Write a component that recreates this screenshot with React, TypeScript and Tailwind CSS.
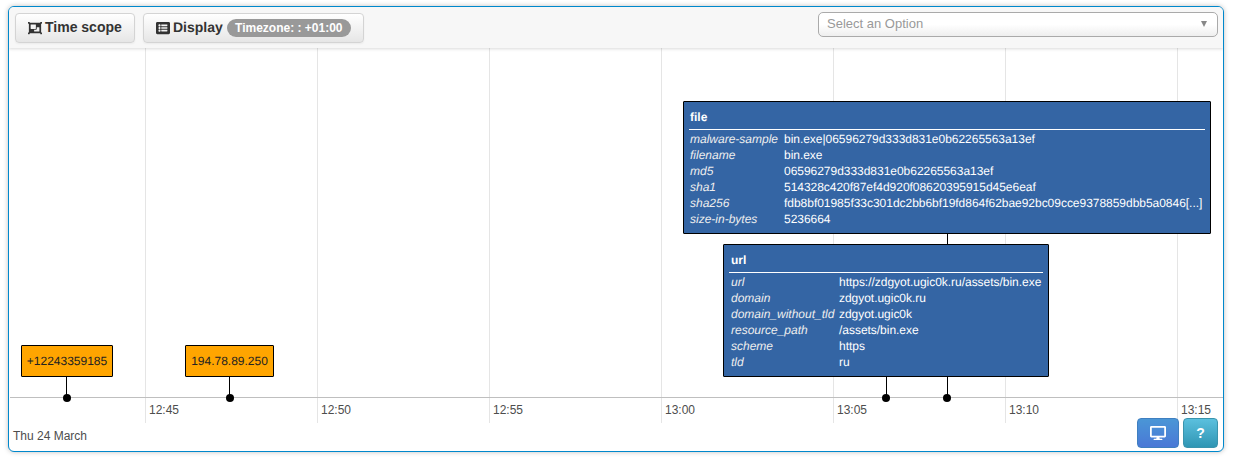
import React from 'react';
import { FaDesktop, FaListAlt, FaObjectGroup } from 'react-icons/fa';

type Row = [string, string];

const FILE_ROWS: Row[] = [
  ['malware-sample', 'bin.exe|06596279d333d831e0b62265563a13ef'],
  ['filename', 'bin.exe'],
  ['md5', '06596279d333d831e0b62265563a13ef'],
  ['sha1', '514328c420f87ef4d920f08620395915d45e6eaf'],
  ['sha256', 'fdb8bf01985f33c301dc2bb6bf19fd864f62bae92bc09cce9378859dbb5a0846[...]'],
  ['size-in-bytes', '5236664'],
];

const URL_ROWS: Row[] = [
  ['url', 'https://zdgyot.ugic0k.ru/assets/bin.exe'],
  ['domain', 'zdgyot.ugic0k.ru'],
  ['domain_without_tld', 'zdgyot.ugic0k'],
  ['resource_path', '/assets/bin.exe'],
  ['scheme', 'https'],
  ['tld', 'ru'],
];

// x is relative to the timeline canvas
const TICKS = [
  { x: 136, label: '12:45' },
  { x: 308, label: '12:50' },
  { x: 480, label: '12:55' },
  { x: 652, label: '13:00' },
  { x: 824, label: '13:05' },
  { x: 996, label: '13:10' },
  { x: 1168, label: '13:15' },
];

function Pin({ x, dot, top }: { x: number; dot: number; top: number }) {
  return (
    <>
      <div className="absolute w-px bg-black" style={{ left: x, top, height: 349 - top }} />
      <div className="absolute w-2 h-2 rounded-full bg-black" style={{ left: dot, top: 346 }} />
    </>
  );
}

function ItemBox({ title, rows, left, top, width, height, keyWidth, indent }: {
  title: string; rows: Row[]; left: number; top: number; width: number; height: number; keyWidth: number; indent: number;
}) {
  return (
    <div
      className="absolute bg-[#3465a4] border border-black rounded-[1px] text-white text-[12px] leading-[16px] px-[5px] overflow-hidden [text-rendering:geometricPrecision]"
      style={{ left, top, width, height }}
    >
      <div className="font-bold pt-[7px] h-[28px] border-b border-white" style={{ paddingLeft: indent }}>{title}</div>
      <div className="pt-px">
        {rows.map(([key, value]) => (
          <div key={key} className="flex whitespace-nowrap" style={{ paddingLeft: indent }}>
            <div className="italic text-[#eeeeee] shrink-0" style={{ width: keyWidth }}>{key}</div>
            <div className="tracking-[-0.03px]">{value}</div>
          </div>
        ))}
      </div>
    </div>
  );
}

function Label({ x, text, width }: { x: number; text: string; width: number }) {
  return (
    <div
      className="absolute top-[297px] h-[32px] bg-[#ffa500] border border-black rounded-[1px] text-[12px] text-[#222] flex items-center justify-center whitespace-nowrap [text-rendering:geometricPrecision]"
      style={{ left: x, width }}
    >
      {text}
    </div>
  );
}

export default function App() {
  const btn = 'h-[30px] flex items-center rounded-[4px] border border-[#d4d4d4] bg-gradient-to-b from-white to-[#e6e6e6] text-[14px] font-bold text-[#333] shadow-[0_1px_2px_rgba(0,0,0,0.05)]';

  return (
    <div className="w-[1233px] h-[460px] bg-white pt-[6px] pl-[8px] font-['Liberation_Sans',Arial,sans-serif] overflow-hidden">
      <div className="w-[1216px] h-[446px] border border-[#0088cc] rounded-[6px] shadow-[0_0_5px_rgba(0,0,0,0.25)] flex flex-col bg-white overflow-hidden">
        <div className="h-[41px] shrink-0 flex items-center bg-[#f7f7f7] shadow-[0_1px_3px_rgba(0,0,0,0.15)] z-10 pl-[6px] pr-[5px]">
          <button className={`${btn} w-[120px] pl-[12px] gap-[3px]`}>
            <FaObjectGroup className="text-[14px]" />
            Time scope
          </button>
          <button className={`${btn} w-[221px] ml-[8px] pl-[12px] gap-[3px]`}>
            <FaListAlt className="text-[14px]" />
            <span className="[text-rendering:geometricPrecision]">Display</span>
            <span className="ml-[1px] w-[124px] h-[18px] rounded-full bg-[#999999] text-white text-[12px] flex items-center justify-center">
              Timezone: : +01:00
            </span>
          </button>
          <div className="ml-auto w-[400px] h-[25px] mb-[7px] rounded-[5px] border border-[#aaaaaa] bg-gradient-to-b from-white via-white to-[#eeeeee] flex items-center justify-between pl-[8px] pr-[10px] text-[13px] text-[#999999]">
            <span>Select an Option</span>
            <span className="w-0 h-0 border-x-[3.5px] border-x-transparent border-t-[6px] border-t-[#888888]" />
          </div>
        </div>

        <div className="relative flex-1">
          {TICKS.map((t) => (
            <React.Fragment key={t.label}>
              <div className="absolute top-0 h-[375px] w-px bg-[#e5e5e5]" style={{ left: t.x }} />
              <div className="absolute top-[355px] text-[12px] leading-[14px] text-[#4d4d4d]" style={{ left: t.x + 4 }}>{t.label}</div>
            </React.Fragment>
          ))}
          <div className="absolute left-px right-0 top-[349px] h-px bg-[#bfbfbf]" />

          <Pin x={57} dot={54} top={329} />
          <Pin x={220} dot={217} top={329} />
          <Pin x={877} dot={873} top={329} />
          <Pin x={938} dot={934} top={186} />

          <Label x={12} text="+12243359185" width={92} />
          <Label x={176} text="194.78.89.250" width={89} />

          <ItemBox title="file" rows={FILE_ROWS} left={674} top={53} width={528} height={133} keyWidth={94} indent={1} />
          <ItemBox title="url" rows={URL_ROWS} left={714} top={196} width={326} height={133} keyWidth={108} indent={2} />

          <div className="absolute left-[4px] top-[381px] text-[12px] leading-[14px] text-[#4d4d4d]">Thu 24 March</div>

          <div className="absolute right-[5px] top-[370px] flex gap-[4px]">
            <button className="w-[42px] h-[30px] rounded-[4px] border border-[#3f7fc0] bg-gradient-to-b from-[#4a96d6] to-[#4a78d6] text-white flex items-center justify-center text-[16px]">
              <FaDesktop />
            </button>
            <button className="w-[35px] h-[30px] rounded-[4px] border border-[#3a94ad] bg-gradient-to-b from-[#5bc0de] to-[#2f96b4] text-white flex items-center justify-center text-[14px] font-bold">
              ?
            </button>
          </div>
        </div>
      </div>
    </div>
  );
}
